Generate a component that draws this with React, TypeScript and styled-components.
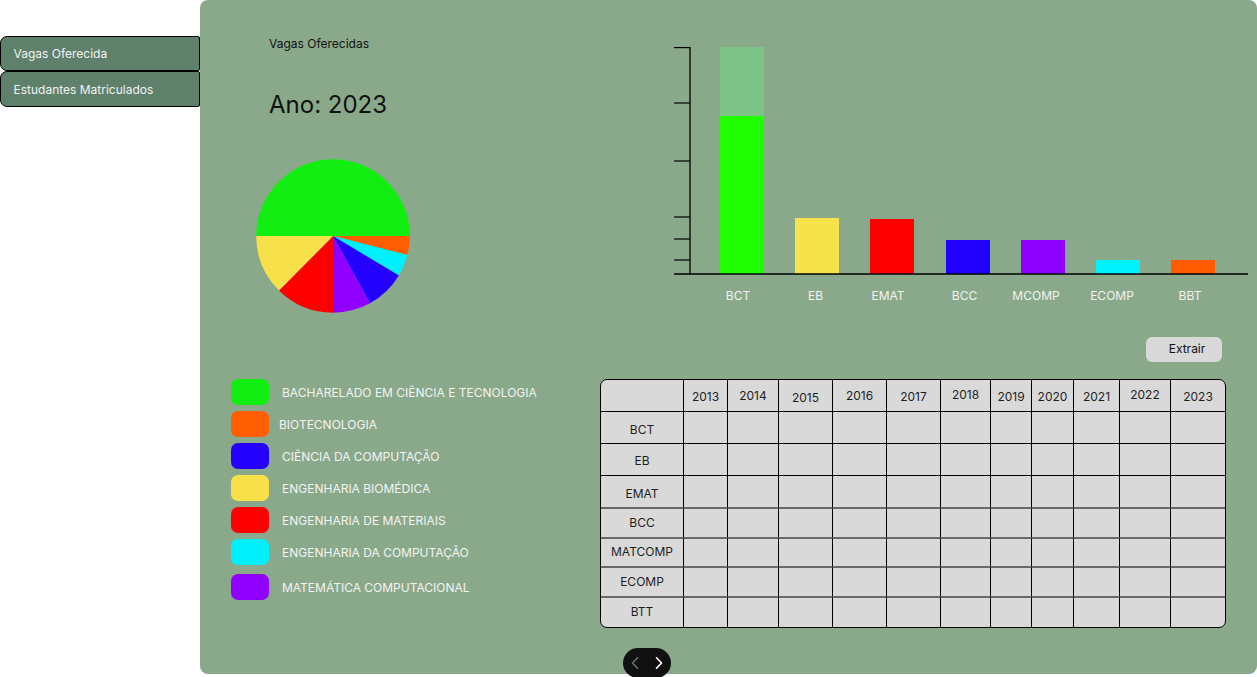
import React from "react";
import styled, { createGlobalStyle } from "styled-components";

const GlobalStyle = createGlobalStyle`
  html, body { margin: 0; padding: 0; background: #ffffff; }
  body { font-family: Inter, "Noto Sans", "Liberation Sans", sans-serif; }
  * { box-sizing: border-box; }
`;

const Page = styled.div`
  display: flex;
  align-items: flex-start;
  width: 1257px;
  height: 677px;
  overflow: hidden;
`;

const Sidebar = styled.nav`
  width: 200px;
  flex: none;
  padding-top: 36px;
  display: flex;
  flex-direction: column;
`;

const NavButton = styled.button<{ $h: number }>`
  height: ${(p) => p.$h}px;
  width: 200px;
  background: #5f806b;
  border: 1.5px solid #000;
  border-radius: 7px 2px 2px 7px;
  color: #f2f2f2;
  font-family: Inter, "Noto Sans", sans-serif;
  font-size: 12px;
  text-align: left;
  padding: 0 0 0 12.5px;
  display: flex;
  align-items: center;
  cursor: pointer;
`;

const Panel = styled.main`
  width: 1057px;
  height: 674px;
  flex: none;
  background: #8aa98a;
  border-radius: 8px;
  display: flex;
  flex-direction: column;
`;

const TopSection = styled.section`
  display: flex;
  flex: none;
  height: 337px;
`;

const Intro = styled.div`
  width: 474px;
  flex: none;
  padding: 36px 0 0 56px;
  display: flex;
  flex-direction: column;
  align-items: flex-start;
`;

const Title = styled.div`
  margin-left: 13px;
  font-size: 12px;
  line-height: 16px;
  color: #111;
`;

const Year = styled.h1`
  margin: 38px 0 0 13px;
  font-size: 24px;
  line-height: 29px;
  font-weight: 400;
  color: #111;
`;

const PieSvg = styled.svg`
  margin-top: 40px;
  display: block;
`;

const ChartBox = styled.div`
  padding-top: 47px;
`;

const BottomSection = styled.section`
  display: flex;
  flex: none;
`;

const Legend = styled.ul`
  width: 400px;
  flex: none;
  margin: 0;
  padding: 42px 0 0 31px;
  list-style: none;
  display: flex;
  flex-direction: column;
`;

const LegendRow = styled.li<{ $gap: number }>`
  display: flex;
  align-items: center;
  height: 26px;
  margin-top: ${(p) => p.$gap}px;
`;

const Swatch = styled.span<{ $color: string }>`
  width: 38px;
  height: 26px;
  border-radius: 7px;
  background: ${(p) => p.$color};
  flex: none;
`;

const LegendLabel = styled.span<{ $indent: number }>`
  margin-left: ${(p) => p.$indent}px;
  font-size: 12px;
  color: #f3f3f3;
  white-space: nowrap;
`;

const TableArea = styled.div`
  width: 626px;
  flex: none;
  display: flex;
  flex-direction: column;
`;

const ToolRow = styled.div`
  display: flex;
  justify-content: flex-end;
  padding-right: 4px;
  margin-bottom: 17px;
`;

const ExtractButton = styled.button`
  width: 76px;
  height: 25px;
  background: #d9d9d9;
  border: none;
  border-radius: 6px;
  font-family: Inter, "Noto Sans", sans-serif;
  font-size: 12px;
  color: #111;
  padding: 0 0 2px 6px;
  cursor: pointer;
`;

const Grid = styled.div`
  display: grid;
  grid-template-columns: 82px 44px 51px 54px 54px 54px 50px 41px 42px 46px 51px 55px;
  grid-template-rows: 31px 32px 32px 32px 30px 29px 30px 31px;
  border: 1px solid #000;
  border-radius: 7px;
  background: #d9d9d9;
  overflow: hidden;
`;

const Cell = styled.div<{ $first?: boolean; $line: "none" | "dark" | "gray"; $dy?: number }>`
  display: flex;
  align-items: center;
  justify-content: center;
  font-size: 12px;
  color: #1e1e1e;
  border-left: ${(p) => (p.$first ? "none" : "1px solid #000")};
  border-top: ${(p) =>
    p.$line === "none" ? "none" : p.$line === "dark" ? "1px solid #000" : "2px solid #696969"};
  padding-top: ${(p) => Math.max(0, (p.$dy ?? 0) * 2)}px;
  padding-bottom: ${(p) => Math.max(0, -(p.$dy ?? 0) * 2)}px;
`;

const Pager = styled.div`
  margin: 20px 0 0 23px;
  width: 48px;
  height: 30px;
  border-radius: 15px;
  background: #111;
  display: flex;
  align-items: center;
  justify-content: center;
  gap: 16px;
`;

const PagerArrow = styled.button`
  background: none;
  border: none;
  padding: 0;
  display: flex;
  cursor: pointer;
`;

const slices = [
  { color: "#12ee12", a0: 180, a1: 360 },
  { color: "#ff5e00", a0: 0, a1: 14.4 },
  { color: "#00f0ff", a0: 14.4, a1: 31 },
  { color: "#2400ff", a0: 31, a1: 61.3 },
  { color: "#8f00ff", a0: 61.3, a1: 90 },
  { color: "#ff0000", a0: 90, a1: 134.7 },
  { color: "#f7e04a", a0: 134.7, a1: 180 },
];

function slicePath(cx: number, cy: number, r: number, a0: number, a1: number) {
  const rad = (d: number) => (d * Math.PI) / 180;
  const x0 = cx + r * Math.cos(rad(a0));
  const y0 = cy + r * Math.sin(rad(a0));
  const x1 = cx + r * Math.cos(rad(a1));
  const y1 = cy + r * Math.sin(rad(a1));
  const large = a1 - a0 > 180 ? 1 : 0;
  return `M ${cx} ${cy} L ${x0} ${y0} A ${r} ${r} 0 ${large} 1 ${x1} ${y1} Z`;
}

const bars = [
  { label: "BCT", x: 46, top: 69, color: "#20ff00", lx: 64 },
  { label: "EB", x: 121, top: 171, color: "#f6e24a", lx: 141.5 },
  { label: "EMAT", x: 196, top: 172, color: "#ff0000", lx: 214 },
  { label: "BCC", x: 272, top: 193, color: "#2200ff", lx: 290.5 },
  { label: "MCOMP", x: 347, top: 193, color: "#8c00ff", lx: 362 },
  { label: "ECOMP", x: 422, top: 213, color: "#00f2ff", lx: 438 },
  { label: "BBT", x: 497, top: 213, color: "#ff5b00", lx: 516 },
];

const ticks = [0.6, 56, 114, 170, 192, 213];

const legend = [
  { color: "#12ee12", label: "BACHARELADO EM CIÊNCIA E TECNOLOGIA", indent: 13, gap: 0 },
  { color: "#ff5e00", label: "BIOTECNOLOGIA", indent: 10, gap: 6 },
  { color: "#2400ff", label: "CIÊNCIA DA COMPUTAÇÃO", indent: 13, gap: 6 },
  { color: "#f7e04a", label: "ENGENHARIA BIOMÉDICA", indent: 13, gap: 6 },
  { color: "#ff0000", label: "ENGENHARIA DE MATERIAIS", indent: 13, gap: 6 },
  { color: "#00f0ff", label: "ENGENHARIA DA COMPUTAÇÃO", indent: 13, gap: 6 },
  { color: "#8f00ff", label: "MATEMÁTICA COMPUTACIONAL", indent: 13, gap: 9 },
];

const years = [
  { y: "2013", dy: 1 },
  { y: "2014", dy: -0.5 },
  { y: "2015", dy: 1.5 },
  { y: "2016", dy: -0.5 },
  { y: "2017", dy: 1 },
  { y: "2018", dy: -1 },
  { y: "2019", dy: 0.5 },
  { y: "2020", dy: 0.5 },
  { y: "2021", dy: 0.5 },
  { y: "2022", dy: -1 },
  { y: "2023", dy: 0.5 },
];

const rows = [
  { name: "BCT", dy: 2, line: "dark" as const },
  { name: "EB", dy: 1, line: "dark" as const },
  { name: "EMAT", dy: 1.5, line: "dark" as const },
  { name: "BCC", dy: -1, line: "gray" as const },
  { name: "MATCOMP", dy: -1, line: "gray" as const },
  { name: "ECOMP", dy: -1, line: "gray" as const },
  { name: "BTT", dy: -1.5, line: "gray" as const },
];

function PieChart() {
  return (
    <PieSvg width={154} height={154} viewBox="0 0 154 154">
      {slices.map((s, i) => (
        <path key={i} d={slicePath(77, 77, 76.8, s.a0, s.a1)} fill={s.color} />
      ))}
    </PieSvg>
  );
}

function BarChart() {
  return (
    <svg width={574} height={262} viewBox="0 0 574 262">
      <rect x={46} y={0} width={44} height={69} fill="#7dc287" />
      {bars.map((b) => (
        <g key={b.label}>
          <rect x={b.x} y={b.top} width={44} height={227 - b.top} fill={b.color} />
          <text
            x={b.lx}
            y={253}
            textAnchor="middle"
            fontSize={12}
            fill="#f2f2f2"
            fontFamily="Inter, 'Noto Sans', sans-serif"
          >
            {b.label}
          </text>
        </g>
      ))}
      <line x1={16} y1={0} x2={16} y2={227.5} stroke="#000" strokeWidth={1.3} />
      {ticks.map((t) => (
        <line key={t} x1={0} y1={t} x2={16} y2={t} stroke="#000" strokeWidth={1.2} />
      ))}
      <line x1={0} y1={227} x2={574} y2={227} stroke="#000" strokeWidth={1.3} />
    </svg>
  );
}

function Chevron({ dir, color }: { dir: "left" | "right"; color: string }) {
  return (
    <svg width={8} height={12} viewBox="0 0 8 12">
      <polyline
        points={dir === "left" ? "6.5,0.8 1.5,6 6.5,11.2" : "1.5,0.8 6.5,6 1.5,11.2"}
        fill="none"
        stroke={color}
        strokeWidth={1.6}
        strokeLinecap="round"
        strokeLinejoin="round"
      />
    </svg>
  );
}

export default function App() {
  return (
    <>
      <GlobalStyle />
      <Page>
        <Sidebar>
          <NavButton $h={35}>Vagas Oferecida</NavButton>
          <NavButton $h={36}>Estudantes Matriculados</NavButton>
        </Sidebar>
        <Panel>
          <TopSection>
            <Intro>
              <Title>Vagas Oferecidas</Title>
              <Year>Ano: 2023</Year>
              <PieChart />
            </Intro>
            <ChartBox>
              <BarChart />
            </ChartBox>
          </TopSection>
          <BottomSection>
            <Legend>
              {legend.map((l) => (
                <LegendRow key={l.label} $gap={l.gap}>
                  <Swatch $color={l.color} />
                  <LegendLabel $indent={l.indent}>{l.label}</LegendLabel>
                </LegendRow>
              ))}
            </Legend>
            <TableArea>
              <ToolRow>
                <ExtractButton>Extrair</ExtractButton>
              </ToolRow>
              <Grid>
                <Cell $first $line="none" />
                {years.map((y) => (
                  <Cell key={y.y} $line="none" $dy={y.dy}>
                    {y.y}
                  </Cell>
                ))}
                {rows.map((r) => (
                  <React.Fragment key={r.name}>
                    <Cell $first $line={r.line} $dy={r.dy}>
                      {r.name}
                    </Cell>
                    {years.map((y) => (
                      <Cell key={y.y} $line={r.line} />
                    ))}
                  </React.Fragment>
                ))}
              </Grid>
              <Pager>
                <PagerArrow aria-label="Anterior">
                  <Chevron dir="left" color="#6e6e6e" />
                </PagerArrow>
                <PagerArrow aria-label="Próximo">
                  <Chevron dir="right" color="#ffffff" />
                </PagerArrow>
              </Pager>
            </TableArea>
          </BottomSection>
        </Panel>
      </Page>
    </>
  );
}
